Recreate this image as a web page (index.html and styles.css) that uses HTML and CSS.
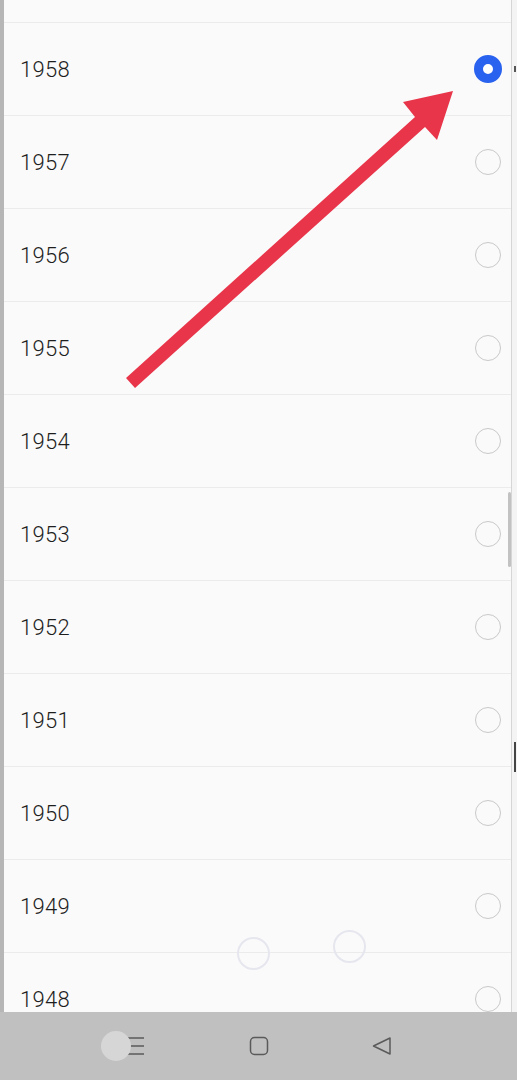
FILE: index.html
```html
<!DOCTYPE html>
<html lang="en">
<head>
  <meta charset="UTF-8" />
  <meta name="viewport" content="width=device-width, initial-scale=1.0" />
  <title>Year picker</title>
  <link rel="stylesheet" href="styles.css">
</head>
<body>
  <div class="screen">
    <!-- ======= YEAR LIST ======= -->
    <div class="main">
      <div class="edge-left"></div>

      <section class="sheet">
        <div class="row row-cut"></div>
        <div class="row"><span class="year">1958</span><span class="radio checked"></span></div>
        <div class="row"><span class="year">1957</span><span class="radio"></span></div>
        <div class="row"><span class="year">1956</span><span class="radio"></span></div>
        <div class="row"><span class="year">1955</span><span class="radio"></span></div>
        <div class="row"><span class="year">1954</span><span class="radio"></span></div>
        <div class="row"><span class="year">1953</span><span class="radio"></span></div>
        <div class="row"><span class="year">1952</span><span class="radio"></span></div>
        <div class="row"><span class="year">1951</span><span class="radio"></span></div>
        <div class="row"><span class="year">1950</span><span class="radio"></span></div>
        <div class="row"><span class="year">1949</span><span class="radio"></span></div>
        <div class="row"><span class="year">1948</span><span class="radio"></span></div>

        <div class="scroll-thumb"></div>
        <span class="touch touch-a"></span>
        <span class="touch touch-b"></span>

        <!-- annotation arrow -->
        <svg class="arrow" width="507" height="420" viewBox="4 0 507 420">
          <polygon points="126,378 415,117 403,102 453,91 437,140 425,127 135,388" fill="#e8354a" />
        </svg>
      </section>

      <div class="edge-right">
        <span class="mark mark-top"></span>
        <span class="mark mark-mid"></span>
      </div>
    </div>

    <!-- ======= NAV BAR ======= -->
    <nav class="navbar">
      <span class="touch-nav"></span>
      <svg class="nav-icon" width="24" height="24" viewBox="0 0 24 24">
        <path d="M4 4h16M4 12h16M4 20h16" stroke="#5a5a5a" stroke-width="1.5" fill="none" />
      </svg>
      <svg class="nav-icon" width="24" height="24" viewBox="0 0 24 24">
        <rect x="3.5" y="3.5" width="17" height="17" rx="4" stroke="#5a5a5a" stroke-width="1.5" fill="none" />
      </svg>
      <svg class="nav-icon" width="24" height="24" viewBox="0 0 24 24">
        <path d="M20 4v16L3.5 12z" stroke="#5a5a5a" stroke-width="1.5" stroke-linejoin="round" fill="none" />
      </svg>
    </nav>
  </div>
</body>
</html>
```

FILE: styles.css
```css
*,*::before,*::after{box-sizing:border-box;margin:0;padding:0}

body {
  font-family: Roboto, "Noto Sans", sans-serif;
  background: #c0c0c0;
  overflow: hidden;
}

.screen {
  width: 517px;
  height: 1080px;
  display: flex;
  flex-direction: column;
}

/* ======= MAIN AREA ======= */
.main {
  flex: 1;
  display: flex;
  min-height: 0;
}
.edge-left { width: 4px; background: #b6b6b6; }
.edge-right {
  width: 6px;
  background: #f4f4f4;
  border-left: 1px solid #d6d6d6;
  position: relative;
}
.mark { position: absolute; left: 2px; width: 2px; background: #555; }
.mark-top { top: 66px; height: 6px; }
.mark-mid { top: 742px; height: 30px; background: #444; }

.sheet {
  flex: 1;
  position: relative;
  overflow: hidden;
  background: #fafafa;
}

.row {
  height: 93px;
  display: flex;
  align-items: center;
  justify-content: space-between;
  padding: 0 10px 0 16px;
  border-bottom: 1px solid #ebebeb;
}
.row-cut { height: 23px; }

.year {
  font-size: 22px;
  font-weight: 300;
  color: #1e1e1e;
  letter-spacing: .3px;
}

.radio {
  width: 26px;
  height: 26px;
  border-radius: 50%;
  border: 1.5px solid #c9c9c9;
}
.radio.checked {
  width: 28px;
  height: 28px;
  margin-right: -1px;
  border: 9.5px solid #2962ef;
  background: #fff;
}

.scroll-thumb {
  position: absolute;
  right: 0;
  top: 492px;
  width: 3px;
  height: 75px;
  border-radius: 2px;
  background: #c2c2c2;
}

/* touch ripples left on the screenshot */
.touch {
  position: absolute;
  width: 33px;
  height: 33px;
  border-radius: 50%;
  border: 2px solid #e6e6ef;
}
.touch-a { left: 233px; top: 937px; }
.touch-b { left: 329px; top: 930px; }

.arrow {
  position: absolute;
  left: 0;
  top: 0;
}

/* ======= NAV BAR ======= */
.navbar {
  height: 68px;
  background: #c0c0c0;
  display: flex;
  align-items: center;
  justify-content: center;
  gap: 99px;
  position: relative;
}
.nav-icon { display: block; }
.touch-nav {
  position: absolute;
  left: 101px;
  top: 19px;
  width: 30px;
  height: 30px;
  border-radius: 50%;
  background: #d6d6d6;
}
```
